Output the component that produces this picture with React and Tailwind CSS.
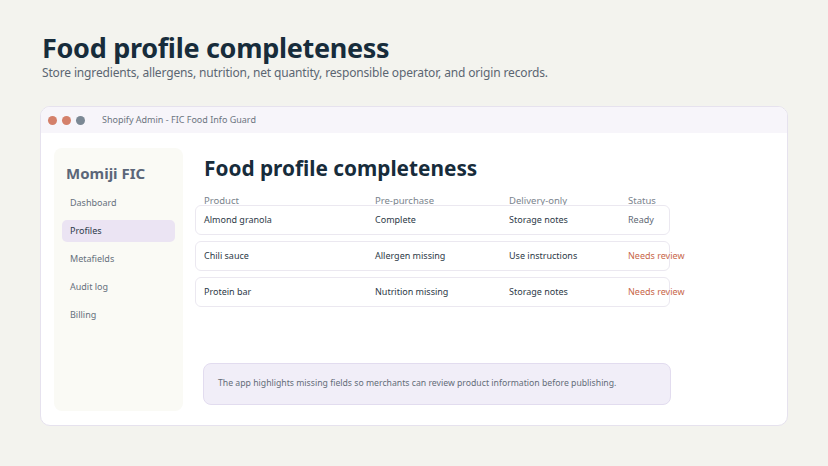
import React from 'react';

const navItems = ['Dashboard', 'Profiles', 'Metafields', 'Audit log', 'Billing'];

const rows = [
  { product: 'Almond granola', pre: 'Complete', delivery: 'Storage notes', status: 'Ready' },
  { product: 'Chili sauce', pre: 'Allergen missing', delivery: 'Use instructions', status: 'Needs review' },
  { product: 'Protein bar', pre: 'Nutrition missing', delivery: 'Storage notes', status: 'Needs review' },
];

const App = () => {
  return (
    <div
      className="w-[828px] h-[466px] bg-[#f3f3ee] overflow-hidden px-[40px] pt-[31px]"
      style={{ fontFamily: '"Noto Sans", "Open Sans", sans-serif' }}
    >
      {/* Page header */}
      <div className="ml-[2px]">
        <h1 className="text-[27px] leading-[34px] font-bold text-[#172c3b] tracking-[-0.3px]">
          Food profile completeness
        </h1>
        <p className="text-[12px] leading-[16px] text-[#5b6672] tracking-[-0.15px]">
          Store ingredients, allergens, nutrition, net quantity, responsible operator, and origin records.
        </p>
      </div>

      {/* Window */}
      <div className="mt-[25px] w-[748px] h-[320px] bg-white rounded-[10px] border border-[#e6e2ee] overflow-hidden flex flex-col">
        <div className="h-[26px] bg-[#f7f5fa] flex items-center px-[7px] shrink-0">
          <div className="flex items-center gap-[5px]">
            <span className="w-[9px] h-[9px] rounded-full bg-[#d4806a]" />
            <span className="w-[9px] h-[9px] rounded-full bg-[#d4806a]" />
            <span className="w-[9px] h-[9px] rounded-full bg-[#7b8894]" />
          </div>
          <span className="ml-[17px] text-[9px] text-[#6b7480]">Shopify Admin - FIC Food Info Guard</span>
        </div>

        <div className="flex flex-1 pl-[13px] pt-[15px] pb-[14px]">
          {/* Sidebar */}
          <aside className="w-[129px] bg-[#fafaf5] rounded-[8px] pt-[13px]">
            <div className="pl-[12px] text-[15px] leading-[24px] font-bold text-[#5b6679]">Momiji FIC</div>
            <nav className="mt-[7px] px-[8px] flex flex-col gap-[6px]">
              {navItems.map((item) => (
                <div
                  key={item}
                  className={`h-[22px] rounded-[5px] px-[8px] flex items-center text-[9px] ${
                    item === 'Profiles' ? 'bg-[#ebe4f3] text-[#2c3a4a]' : 'text-[#66717d]'
                  }`}
                >
                  {item}
                </div>
              ))}
            </nav>
          </aside>

          {/* Main */}
          <main className="ml-[12px] flex-1 flex flex-col">
            <h2 className="pl-[9px] pt-[5px] text-[20.8px] leading-[30px] font-bold text-[#172c3b]">
              Food profile completeness
            </h2>
            <div className="mt-[11px] pl-[9px] grid grid-cols-[171px_134px_119px_32px] text-[9.5px] leading-[14px] text-[#7a838d]">
              <span>Product</span>
              <span>Pre-purchase</span>
              <span>Delivery-only</span>
              <span>Status</span>
            </div>
            <div className="mt-[-3px] flex flex-col gap-[6px]">
              {rows.map((r) => (
                <div
                  key={r.product}
                  className="w-[475px] h-[30px] rounded-[6px] border border-[#ebe8f0] px-[8px] grid grid-cols-[171px_134px_119px_32px] items-center text-[9px] text-[#2d3a48] whitespace-nowrap"
                >
                  <span>{r.product}</span>
                  <span>{r.pre}</span>
                  <span>{r.delivery}</span>
                  <span className={r.status === 'Ready' ? 'text-[#5f6a76]' : 'text-[#c8674a]'}>{r.status}</span>
                </div>
              ))}
            </div>
            <div className="mt-[56px] ml-[8px] w-[468px] h-[42px] rounded-[8px] bg-[#f1eef8] border border-[#e2dcef] flex items-center px-[14px] text-[8.7px] text-[#646d78]">
              The app highlights missing fields so merchants can review product information before publishing.
            </div>
          </main>
        </div>
      </div>
    </div>
  );
};

export default App;
